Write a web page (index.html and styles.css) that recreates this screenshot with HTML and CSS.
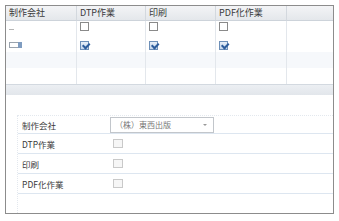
FILE: index.html
```html
<!DOCTYPE html>
<html lang="ja">
<head>
  <meta charset="UTF-8">
  <title>制作会社</title>
  <link rel="stylesheet" href="styles.css">
</head>
<body>
  <div class="panel">
    <div class="grid">
      <div class="hcell">制作会社</div>
      <div class="hcell">DTP作業</div>
      <div class="hcell">印刷</div>
      <div class="hcell">PDF化作業</div>
      <div class="hcell last"></div>

      <div class="cell r1"><span class="dash"></span></div>
      <div class="cell r1"><span class="cb"></span></div>
      <div class="cell r1"><span class="cb"></span></div>
      <div class="cell r1"><span class="cb"></span></div>
      <div class="cell r1 last"></div>

      <div class="cell r2"><span class="mini"><span class="mini-btn"></span></span></div>
      <div class="cell r2"><span class="cb on"></span></div>
      <div class="cell r2"><span class="cb on"></span></div>
      <div class="cell r2"><span class="cb on"></span></div>
      <div class="cell r2 last"></div>

      <div class="cell r3 alt"></div>
      <div class="cell r3 alt"></div>
      <div class="cell r3 alt"></div>
      <div class="cell r3 alt"></div>
      <div class="cell r3 alt last"></div>

      <div class="cell r4"></div>
      <div class="cell r4"></div>
      <div class="cell r4"></div>
      <div class="cell r4"></div>
      <div class="cell r4 last"></div>
    </div>

    <div class="hbar"></div>

    <div class="form">
      <div class="frow first">
        <span class="flabel">制作会社</span>
        <span class="select">（株）東西出版<span class="arrow"></span></span>
      </div>
      <div class="frow">
        <span class="flabel">DTP作業</span>
        <span class="fcb"></span>
      </div>
      <div class="frow">
        <span class="flabel">印刷</span>
        <span class="fcb"></span>
      </div>
      <div class="frow">
        <span class="flabel">PDF化作業</span>
        <span class="fcb"></span>
      </div>
    </div>
  </div>
</body>
</html>
```

FILE: styles.css
```css
body {
  margin: 0;
  background: #fff;
  font-family: "Noto Sans CJK JP", "Noto Sans", sans-serif;
  color: #3a3a3a;
}

.panel {
  margin: 5px 0 0 5px;
  width: 329px;
  height: 209px;
  border: 1px solid #8c8c8c;
  box-sizing: border-box;
  display: flex;
  flex-direction: column;
}

.grid {
  display: grid;
  grid-template-columns: 71px 69px 70px 71px 1fr;
  grid-template-rows: 15px 15px 16px 16px 16px;
}

.hcell {
  background: linear-gradient(#f3f4f6, #e4e7eb);
  border-right: 1px solid #d3d8de;
  border-bottom: 1px solid #cdd3da;
  font-size: 9px;
  line-height: 14px;
  padding-left: 3px;
  color: #3a3a3a;
}

.cell {
  border-right: 1px solid #e3e7ec;
  padding-left: 3px;
  display: flex;
}

.last {
  border-right: none;
}

.r1 {
  align-items: flex-start;
  padding-top: 1px;
}

.r2 {
  align-items: center;
  padding-top: 2px;
}

.alt {
  background: #f6f8fb;
}

.dash {
  width: 5px;
  height: 1px;
  margin-top: 7px;
  background: #b5b5b5;
}

.cb {
  width: 9px;
  height: 9px;
  box-sizing: border-box;
  border: 1px solid #8a8a8a;
  background: #fff;
  position: relative;
}

.cb.on {
  border-color: #6d8fb8;
  background: linear-gradient(#e6eef8, #c4d6ec);
}

.cb.on::after {
  content: "";
  position: absolute;
  left: 1px;
  top: 0;
  width: 5px;
  height: 3px;
  border-left: 2px solid #2d5d9c;
  border-bottom: 2px solid #2d5d9c;
  transform: rotate(-45deg) translate(0, 1px);
}

.mini {
  width: 13px;
  height: 6px;
  box-sizing: border-box;
  border: 1px solid #9aa3ad;
  background: #fff;
  position: relative;
}

.mini-btn {
  position: absolute;
  right: -1px;
  top: -1px;
  width: 4px;
  height: 6px;
  background: #7f9cc0;
}

.hbar {
  height: 11px;
  border-top: 1px solid #d3d9e0;
  background: linear-gradient(#eceff3, #e2e6eb);
  box-sizing: border-box;
}

.form {
  margin: 20px 0 0 11px;
  border-top: 1px dotted #e3e8ee;
  border-left: 1px dotted #e3e8ee;
  flex: 1;
}

.frow {
  display: flex;
  align-items: center;
  height: 20px;
  border-bottom: 1px solid #dde6f0;
  box-sizing: border-box;
  font-size: 8.5px;
  color: #3a3a3a;
  padding-left: 4px;
}

.frow.first {
  height: 18px;
}

.flabel {
  width: 88px;
}

.select {
  width: 104px;
  height: 16px;
  box-sizing: border-box;
  border: 1px solid #c2c6cb;
  background: #fff;
  color: #777;
  font-size: 8px;
  line-height: 14px;
  padding-left: 4px;
  display: flex;
  justify-content: space-between;
  align-items: center;
  padding-right: 6px;
}

.arrow {
  width: 0;
  height: 0;
  border-left: 2px solid transparent;
  border-right: 2px solid transparent;
  border-top: 2px solid #999;
}

.fcb {
  width: 10px;
  height: 9px;
  margin-left: 3px;
  box-sizing: border-box;
  border: 1px solid #c9c9c9;
  background: #f6f6f6;
}
```
